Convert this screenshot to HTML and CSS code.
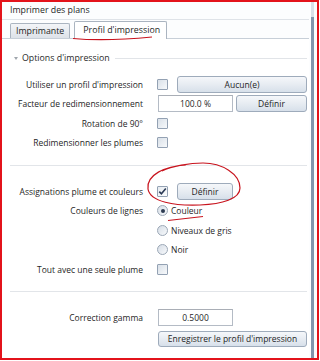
FILE: index.html
```html
<!DOCTYPE html>
<html lang="fr">
<head>
<meta charset="utf-8">
<link rel="stylesheet" href="styles.css">
</head>
<body>
<div class="window">
  <div class="main">
    <div class="title">Imprimer des plans</div>
    <div class="tabs">
      <div class="tab">Imprimante</div>
      <div class="tab active">Profil d'impression</div>
    </div>
    <div class="panel">
      <div class="group-head"><span class="tri"></span><span class="gtext">Options d'impression</span><span class="rule"></span></div>
      <div class="form first">
        <div class="label">Utiliser un profil d'impression</div>
        <div class="ctrl"><span class="check"></span><span class="btn wide">Aucun(e)</span></div>
        <div class="label">Facteur de redimensionnement</div>
        <div class="ctrl"><span class="input">100.0 %</span><span class="btn def">Définir</span></div>
        <div class="label">Rotation de 90°</div>
        <div class="ctrl"><span class="check"></span></div>
        <div class="label">Redimensionner les plumes</div>
        <div class="ctrl"><span class="check"></span></div>
      </div>
      <div class="sep"></div>
      <div class="form">
        <div class="label">Assignations plume et couleurs</div>
        <div class="ctrl"><span class="check on"><svg viewBox="0 0 11 11" class="tick"><path d="M2.3 5.6 L4.4 7.8 L8.8 2.6" fill="none" stroke="#2b3a55" stroke-width="1.6"/></svg></span><span class="btn def2">Définir</span></div>
        <div class="label">Couleurs de lignes</div>
        <div class="ctrl"><span class="radio on"></span><span class="rtext">Couleur</span></div>
        <div class="label"></div>
        <div class="ctrl"><span class="radio"></span><span class="rtext">Niveaux de gris</span></div>
        <div class="label"></div>
        <div class="ctrl"><span class="radio"></span><span class="rtext">Noir</span></div>
        <div class="label">Tout avec une seule plume</div>
        <div class="ctrl"><span class="check"></span></div>
      </div>
      <div class="sep"></div>
      <div class="form gamma">
        <div class="label">Correction gamma</div>
        <div class="ctrl"><span class="input">0.5000</span></div>
        <div class="label"></div>
        <div class="ctrl"><span class="btn save">Enregistrer le profil d'impression</span></div>
      </div>
    </div>
  </div>
  <div class="scroll"><div class="thumb"></div></div>
  <svg class="marks" width="320" height="361" viewBox="0 0 320 361">
    <path d="M73 38.5 Q105 41.5 152 37" fill="none" stroke="#c8141e" stroke-width="1.2"/>
    <path d="M186 165 C165 166 146 175 148 189 C150 202 175 206 200 205 C222 204 240 199 240 188 C240 174 222 163 203 163 C190 163 172 166 162 171" fill="none" stroke="#c8141e" stroke-width="1.2"/>
    <path d="M168 220.5 Q185 218.5 203 216.5" fill="none" stroke="#c8141e" stroke-width="1.2"/>
  </svg>
</div>
</body>
</html>
```

FILE: styles.css
```css
html, body {
  margin: 0;
  padding: 0;
  background: #ffffff;
}
body {
  font-family: "Open Sans", "Noto Sans", sans-serif;
  font-size: 8.5px;
  color: #1f1f1f;
}
.window {
  position: relative;
  width: 319px;
  height: 360px;
  box-sizing: border-box;
  border: 2px solid #e3131b;
  display: flex;
  background: #fcfdfe;
}
.main {
  width: 307px;
  display: flex;
  flex-direction: column;
}
.title {
  height: 17px;
  line-height: 16px;
  padding-left: 8px;
  border-bottom: 1px solid #dfe3e8;
  font-size: 8.8px;
}
.tabs {
  height: 18px;
  display: flex;
  align-items: flex-end;
  padding-left: 8px;
  gap: 4px;
  border-bottom: 1px solid #c7cfd8;
}
.tab {
  height: 14px;
  line-height: 14px;
  padding: 0 5px;
  border: 1px solid #aab4c0;
  border-bottom: none;
  border-radius: 2px 2px 0 0;
  background: linear-gradient(#f3f5f8, #dde2e8);
  margin-bottom: 0;
  font-size: 8.8px;
}
.tab.active {
  height: 17px;
  line-height: 17px;
  padding: 0 6px 0 8px;
  background: #ffffff;
  margin-bottom: -1px;
}
.panel {
  flex: 1;
  display: flex;
  flex-direction: column;
  background: #ffffff;
}
.group-head {
  margin-top: 9px;
  height: 20px;
  display: flex;
  align-items: center;
  padding-left: 12px;
}
.tri {
  width: 0;
  height: 0;
  border-left: 2.5px solid transparent;
  border-right: 2.5px solid transparent;
  border-top: 3px solid #a0a6ad;
  margin-right: 4px;
}
.gtext {
  font-size: 8.8px;
  color: #2a2a2a;
}
.rule {
  flex: 1;
  height: 1px;
  background: #e1e4e8;
  margin-left: 5px;
  margin-right: 2px;
}
.form {
  display: grid;
  grid-template-columns: 133px 1fr;
  grid-auto-rows: 19.5px;
  column-gap: 14px;
  padding-left: 8px;
  padding-right: 2px;
  margin-top: 15.25px;
}
.form.first {
  margin-top: 6.5px;
}
.form.gamma {
  row-gap: 2px;
}
.label {
  text-align: right;
  white-space: nowrap;
  display: flex;
  align-items: center;
  justify-content: flex-end;
}
.ctrl {
  display: flex;
  align-items: center;
}
.check {
  box-sizing: border-box;
  width: 11px;
  height: 11px;
  border: 1px solid #93a1b3;
  border-radius: 1px;
  background: linear-gradient(135deg, #d9e0e8, #f7f9fb);
  flex: none;
  position: relative;
}
.check.on {
  background: linear-gradient(135deg, #e6ebf0, #fbfcfd);
}
.tick {
  position: absolute;
  left: -1px;
  top: -1px;
  width: 11px;
  height: 11px;
}
.radio {
  box-sizing: border-box;
  width: 11px;
  height: 11px;
  border: 1px solid #9ba7b6;
  border-radius: 50%;
  background: linear-gradient(135deg, #d6dde6, #f7f9fb);
  flex: none;
  position: relative;
}
.radio.on::after {
  content: "";
  position: absolute;
  left: 2.5px;
  top: 2.5px;
  width: 4px;
  height: 4px;
  border-radius: 50%;
  background: #2d3b52;
}
.rtext {
  margin-left: 3px;
  white-space: nowrap;
}
.btn {
  box-sizing: border-box;
  height: 17px;
  display: flex;
  align-items: center;
  justify-content: center;
  border: 1px solid #9eabbb;
  border-radius: 3px;
  background: linear-gradient(#f5f7fa, #e7ecf2 50%, #d7e0ea);
  white-space: nowrap;
}
.btn.wide {
  width: 130px;
  margin-left: 9px;
}
.btn.def {
  width: 71px;
  margin-left: 3px;
}
.btn.def2 {
  width: 56px;
  margin-left: 9px;
}
.btn.save {
  width: 149px;
  margin-left: 1px;
  height: 16px;
}
.input {
  box-sizing: border-box;
  width: 75px;
  height: 17px;
  margin-left: 1px;
  display: flex;
  align-items: center;
  justify-content: center;
  border: 1px solid #b4bbc5;
  border-top-color: #a9aeb6;
  background: #ffffff;
}
.sep {
  height: 1px;
  background: #e2e5e9;
  margin: 12.5px 2px 0 8px;
}
.form.first + .sep {
  margin-top: 12.5px;
}
.gamma {
  margin-top: 15.25px;
}
.scroll {
  width: 3px;
  margin-left: 2px;
  background: #8395ad;
  display: flex;
  flex-direction: column;
}
.thumb {
  height: 15px;
  background: #d9e0e9;
}
.marks {
  position: absolute;
  left: -2px;
  top: -2px;
  pointer-events: none;
}
```
